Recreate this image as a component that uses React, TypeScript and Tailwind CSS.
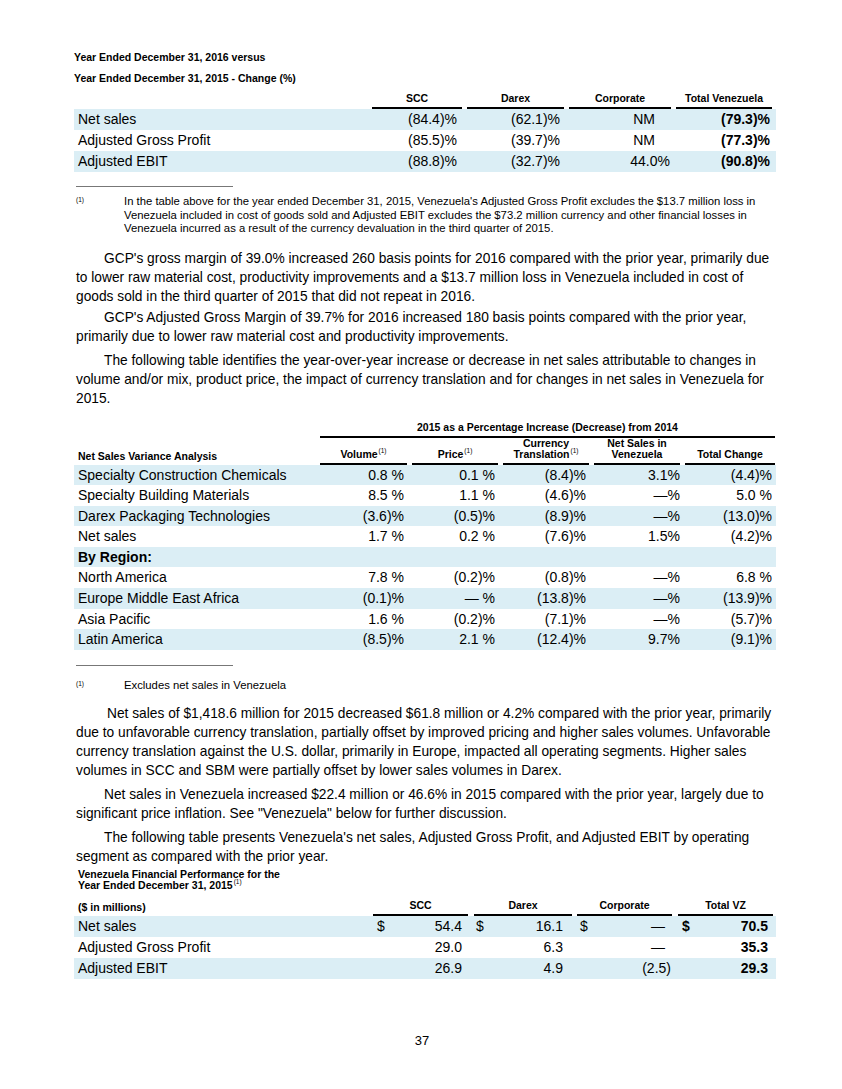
import React from 'react';

const shade = 'bg-[#dbeef5]';

function Sup() {
  return <span className="text-[6.5px] font-normal leading-none relative top-[-5px] ml-[1px]">(1)</span>;
}

function Para({ lines, first = 'indent-[28px]', mt = 'mt-[5px]' }: { lines: string[]; first?: string; mt?: string }) {
  return (
    <p className={`text-[13.75px] leading-[19px] whitespace-nowrap ${mt} ${first}`}>
      {lines.map((l, i) => (
        <React.Fragment key={i}>
          {l}
          {i < lines.length - 1 && <br />}
        </React.Fragment>
      ))}
    </p>
  );
}

const t1 = [
  ['Net sales', '(84.4)%', '(62.1)%', 'NM', '(79.3)%'],
  ['Adjusted Gross Profit', '(85.5)%', '(39.7)%', 'NM', '(77.3)%'],
  ['Adjusted EBIT', '(88.8)%', '(32.7)%', '44.0%', '(90.8)%'],
];

const t2: [string, string, string, string, string, string][] = [
  ['Specialty Construction Chemicals', '0.8 %', '0.1 %', '(8.4)%', '3.1%', '(4.4)%'],
  ['Specialty Building Materials', '8.5 %', '1.1 %', '(4.6)%', '—%', '5.0 %'],
  ['Darex Packaging Technologies', '(3.6)%', '(0.5)%', '(8.9)%', '—%', '(13.0)%'],
  ['Net sales', '1.7 %', '0.2 %', '(7.6)%', '1.5%', '(4.2)%'],
  ['By Region:', '', '', '', '', ''],
  ['North America', '7.8 %', '(0.2)%', '(0.8)%', '—%', '6.8 %'],
  ['Europe Middle East Africa', '(0.1)%', '— %', '(13.8)%', '—%', '(13.9)%'],
  ['Asia Pacific', '1.6 %', '(0.2)%', '(7.1)%', '—%', '(5.7)%'],
  ['Latin America', '(8.5)%', '2.1 %', '(12.4)%', '9.7%', '(9.1)%'],
];

function Rule() {
  return <div className="w-[157px] h-px bg-[#777]" />;
}

export default function App() {
  return (
    <div className="w-[842px] min-h-[1089px] bg-white text-black font-['Liberation_Sans',Arial,sans-serif]">
      <div className="pl-[74px] pt-[47px] w-[776px]">
        <div className="text-[10.5px] font-bold leading-[21px]">
          <div>Year Ended December 31, 2016 versus</div>
          <div>Year Ended December 31, 2015 - Change (%)</div>
        </div>

        {/* table 1 */}
        <div className="w-[702px]">
          <div className="grid grid-cols-[298px_95px_102px_107px_100px] h-[20px] items-end text-[10.5px] font-bold">
            <div />
            <div className="mr-[5px] border-b-2 border-black text-center leading-[12px] pb-[3px]">SCC</div>
            <div className="mr-[5px] border-b-2 border-black text-center leading-[12px] pb-[3px]">Darex</div>
            <div className="mr-[5px] border-b-2 border-black text-center leading-[12px] pb-[3px]">Corporate</div>
            <div className="mr-[4px] border-b-2 border-black text-center leading-[12px] pb-[3px]">Total Venezuela</div>
          </div>
          {t1.map((r, i) => (
            <div key={r[0]} className={`grid grid-cols-[298px_95px_102px_107px_100px] h-[21px] items-center text-[14px] ${i % 2 === 0 ? shade : ''}`}>
              <div className="pl-[4px]">{r[0]}</div>
              <div className="text-right pr-[10px]">{r[1]}</div>
              <div className="text-right pr-[9px]">{r[2]}</div>
              <div className={`text-right ${r[3] === 'NM' ? 'pr-[21px]' : 'pr-[6px]'}`}>{r[3]}</div>
              <div className="text-right pr-[6px] font-bold">{r[4]}</div>
            </div>
          ))}
        </div>

        <div className="mt-[14px] ml-[2px]">
          <Rule />
        </div>
        <div className="flex mt-[8px] text-[11.3px] leading-[13.5px] whitespace-nowrap">
          <div className="w-[50px] pl-[2px] text-[6.5px] leading-[10px]">(1)</div>
          <div>
            In the table above for the year ended December 31, 2015, Venezuela's Adjusted Gross Profit excludes the $13.7 million loss in
            <br />
            Venezuela included in cost of goods sold and Adjusted EBIT excludes the $73.2 million currency and other financial losses in
            <br />
            Venezuela incurred as a result of the currency devaluation in the third quarter of 2015.
          </div>
        </div>

        <div className="pl-[2px] mt-[13px]">
          <Para
            lines={[
              "GCP's gross margin of 39.0% increased 260 basis points for 2016 compared with the prior year, primarily due",
              'to lower raw material cost, productivity improvements and a $13.7 million loss in Venezuela included in cost of',
              'goods sold in the third quarter of 2015 that did not repeat in 2016.',
            ]}
          />
          <Para
            mt="mt-[2px]"
            lines={[
              "GCP's Adjusted Gross Margin of 39.7% for 2016 increased 180 basis points compared with the prior year,",
              'primarily due to lower raw material cost and productivity improvements.',
            ]}
          />
          <Para
            lines={[
              'The following table identifies the year-over-year increase or decrease in net sales attributable to changes in',
              'volume and/or mix, product price, the impact of currency translation and for changes in net sales in Venezuela for',
              '2015.',
            ]}
          />
        </div>

        {/* table 2 */}
        <div className="w-[702px] mt-[13px]">
          <div className="grid grid-cols-[246px_456px] text-[10.5px] font-bold">
            <div />
            <div className="border-b-2 border-black text-center leading-[12px] pb-[3px] mr-[1px]">
              2015 as a Percentage Increase (Decrease) from 2014
            </div>
          </div>
          <div className="grid grid-cols-[246px_92px_91px_91px_91px_91px] h-[27px] items-end text-[10.5px] font-bold leading-[11px]">
            <div className="pl-[4px] pb-[3px]">Net Sales Variance Analysis</div>
            <div className="mr-[5px] border-b-2 border-black text-center pb-[3px]">
              Volume<Sup />
            </div>
            <div className="mr-[5px] border-b-2 border-black text-center pb-[3px]">
              Price<Sup />
            </div>
            <div className="mr-[5px] border-b-2 border-black text-center pb-[3px]">
              Currency
              <br />
              Translation<Sup />
            </div>
            <div className="mr-[5px] border-b-2 border-black text-center pb-[3px]">
              Net Sales in
              <br />
              Venezuela
            </div>
            <div className="mr-[1px] border-b-2 border-black text-center pb-[3px]">Total Change</div>
          </div>
          {t2.map((r, i) => (
            <div key={r[0]} className={`grid grid-cols-[246px_92px_91px_91px_91px_91px] h-[20.6px] items-center text-[14px] ${i % 2 === 0 ? shade : ''}`}>
              <div className={`pl-[4px] ${r[0] === 'By Region:' ? 'font-bold' : ''}`}>{r[0]}</div>
              <div className="text-right pr-[8px]">{r[1]}</div>
              <div className="text-right pr-[8px]">{r[2]}</div>
              <div className="text-right pr-[8px]">{r[3]}</div>
              <div className="text-right pr-[5px]">{r[4]}</div>
              <div className="text-right pr-[4px]">{r[5]}</div>
            </div>
          ))}
        </div>

        <div className="mt-[15px] ml-[2px]">
          <Rule />
        </div>
        <div className="flex mt-[13px] text-[11.3px] leading-[13.5px]">
          <div className="w-[50px] pl-[2px] text-[6.5px] leading-[10px]">(1)</div>
          <div>Excludes net sales in Venezuela</div>
        </div>

        <div className="pl-[2px] mt-[12px]">
          <Para
            first="indent-[31px]"
            lines={[
              'Net sales of $1,418.6 million for 2015 decreased $61.8 million or 4.2% compared with the prior year, primarily',
              'due to unfavorable currency translation, partially offset by improved pricing and higher sales volumes. Unfavorable',
              'currency translation against the U.S. dollar, primarily in Europe, impacted all operating segments. Higher sales',
              'volumes in SCC and SBM were partially offset by lower sales volumes in Darex.',
            ]}
          />
          <Para
            lines={[
              'Net sales in Venezuela increased $22.4 million or 46.6% in 2015 compared with the prior year, largely due to',
              'significant price inflation. See "Venezuela" below for further discussion.',
            ]}
          />
          <Para
            lines={[
              "The following table presents Venezuela's net sales, Adjusted Gross Profit, and Adjusted EBIT by operating",
              'segment as compared with the prior year.',
            ]}
          />
        </div>

        {/* table 3 */}
        <div className="w-[702px] mt-[3px]">
          <div className="text-[10.5px] font-bold leading-[11px] pl-[4px]">
            Venezuela Financial Performance for the
            <br />
            Year Ended December 31, 2015<Sup />
          </div>
          <div className="grid grid-cols-[299px_101px_103px_101px_98px] h-[25px] items-end text-[10.5px] font-bold leading-[12px]">
            <div className="pl-[4px] pb-[3px]">($ in millions)</div>
            <div className="mr-[6px] border-b-2 border-black text-center pb-[3px]">SCC</div>
            <div className="mr-[5px] border-b-2 border-black text-center pb-[3px]">Darex</div>
            <div className="mr-[6px] border-b-2 border-black text-center pb-[3px]">Corporate</div>
            <div className="mr-[3px] border-b-2 border-black text-center pb-[3px]">Total VZ</div>
          </div>
          {[
            ['Net sales', '54.4', '16.1', '—', '70.5', true],
            ['Adjusted Gross Profit', '29.0', '6.3', '—', '35.3', false],
            ['Adjusted EBIT', '26.9', '4.9', '(2.5)', '29.3', false],
          ].map((r, i) => (
            <div key={r[0] as string} className={`grid grid-cols-[299px_101px_103px_101px_98px] h-[21px] items-center text-[14px] ${i % 2 === 0 ? shade : ''}`}>
              <div className="pl-[4px]">{r[0]}</div>
              <div className="flex justify-between pl-[4px] pr-[12px]">
                <span>{r[5] ? '$' : ''}</span>
                <span>{r[1]}</span>
              </div>
              <div className="flex justify-between pl-[2px] pr-[14px]">
                <span>{r[5] ? '$' : ''}</span>
                <span>{r[2]}</span>
              </div>
              <div className={`flex justify-between pl-[3px] ${r[3] === '—' ? 'pr-[13px]' : 'pr-[7px]'}`}>
                <span>{r[5] ? '$' : ''}</span>
                <span>{r[3]}</span>
              </div>
              <div className="flex justify-between pl-[4px] pr-[8px] font-bold">
                <span>{r[5] ? '$' : ''}</span>
                <span>{r[4]}</span>
              </div>
            </div>
          ))}
        </div>
      </div>

      <div className="text-center text-[13px] mt-[52px] pb-[38px] pl-[2px]">37</div>
    </div>
  );
}
